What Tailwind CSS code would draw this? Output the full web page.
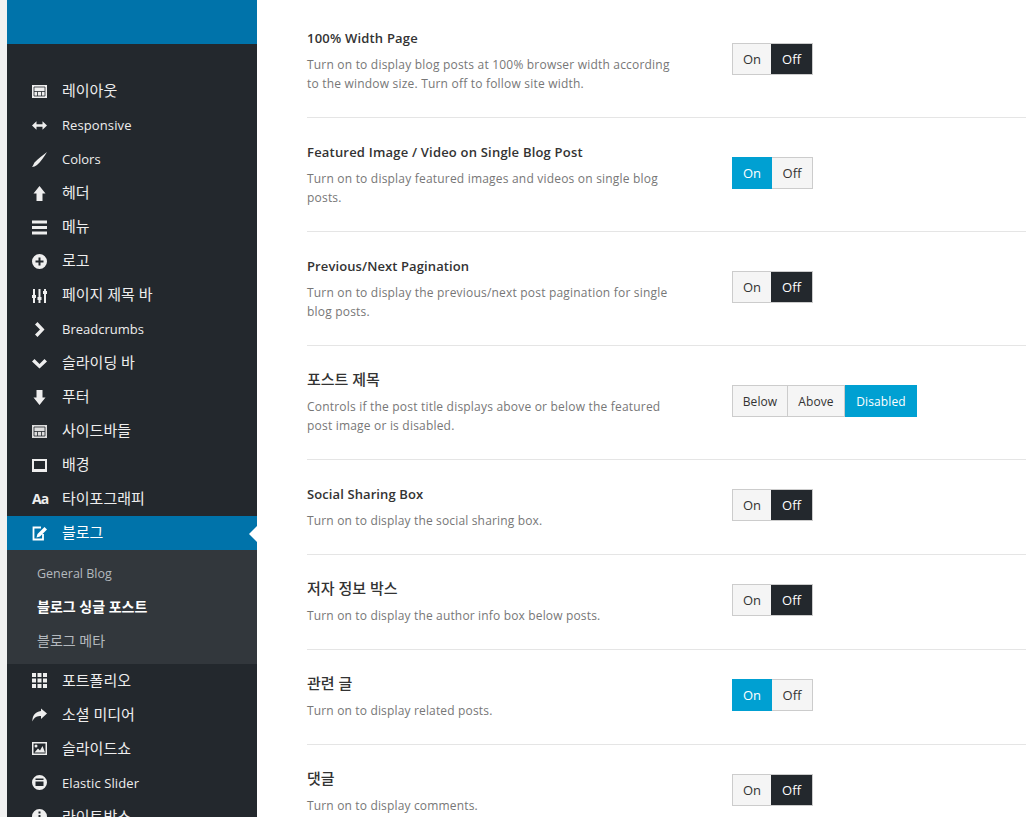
<!DOCTYPE html>
<html lang="ko">
<head>
    <meta charset="UTF-8">
    <meta name="viewport" content="width=device-width, initial-scale=1.0">
    <title>블로그 싱글 포스트</title>
    <script src="https://cdn.jsdelivr.net/npm/@tailwindcss/browser@4"></script>
</head>
<body class="bg-white overflow-hidden font-['Open_Sans','Noto_Sans_CJK_KR',sans-serif]">
<div class="flex h-[817px] w-[1026px] overflow-hidden">
    <div class="w-[7px] shrink-0 bg-[#f1f1f1]"></div>

    <!-- sidebar -->
    <aside class="w-[250px] shrink-0 bg-[#23282d] text-[13px] text-[#eee]">
        <div class="h-[44px] bg-[#0073aa]"></div>
        <ul class="pt-[30px]">
            <li class="flex h-[34px] items-center gap-[15px] pl-[25px]">
                <svg class="w-[15px] h-[15px]" viewBox="0 0 15 15"><path fill="#eee" d="M0 1h15v13H0z"/><path fill="none" stroke="#23282d" stroke-width=".8" d="M2 3h11v9H2zM2 7.500h11M5.500 7.500V12M9.500 7.500V12"/></svg>
                <span class="pb-[2px] text-[15px]">레이아웃</span>
            </li>
            <li class="flex h-[34px] items-center gap-[15px] pl-[25px]">
                <svg class="w-[15px] h-[15px]" viewBox="0 0 15 15" fill="#eee"><path d="M0 7.500 4.500 3.200v3h6v-3L15 7.500l-4.500 4.300v-3h-6v3z"/></svg>
                <span class="pt-[2px] tracking-[.1px]">Responsive</span>
            </li>
            <li class="flex h-[34px] items-center gap-[15px] pl-[25px]">
                <svg class="w-[15px] h-[15px]" viewBox="0 0 15 15" fill="#eee"><path d="M15 0C12 5 8.500 10 5 13 3.500 14.200 1.500 15 0 15 1 14 1.500 12 2.500 10.500 6 7 11 3 15 0z"/></svg>
                <span class="pt-[2px]">Colors</span>
            </li>
            <li class="flex h-[34px] items-center gap-[15px] pl-[25px]">
                <svg class="w-[15px] h-[15px]" viewBox="0 0 15 15" fill="#eee"><path d="M7.500 0 13.500 7.500H10.500v7.500h-6V7.500H1.500z"/></svg>
                <span class="pb-[2px] text-[15px]">헤더</span>
            </li>
            <li class="flex h-[34px] items-center gap-[15px] pl-[25px]">
                <svg class="w-[15px] h-[15px]" viewBox="0 0 15 15" fill="#eee"><path d="M0 .500h15v3H0zM0 6h15v3H0zM0 11.500h15v3H0z"/></svg>
                <span class="pb-[2px] text-[15px]">메뉴</span>
            </li>
            <li class="flex h-[34px] items-center gap-[15px] pl-[25px]">
                <svg class="w-[15px] h-[15px]" viewBox="0 0 15 15" fill="#eee"><path fill-rule="evenodd" d="M7.500 0a7.500 7.500 0 1 0 0 15 7.500 7.500 0 0 0 0-15zM6.500 3.500h2v3h3v2h-3v3h-2v-3h-3v-2h3z"/></svg>
                <span class="pb-[2px] text-[15px]">로고</span>
            </li>
            <li class="flex h-[34px] items-center gap-[15px] pl-[25px]">
                <svg class="w-[15px] h-[15px]" viewBox="0 0 15 15" fill="#eee"><path d="M1 1h2v14H1zM0 7h4v3H0zM6.500 1h2v14h-2zM5.500 9h4v3h-4zM12 1h2v14h-2zM11 3h4v3h-4z"/></svg>
                <span class="pb-[2px] text-[15px]">페이지 제목 바</span>
            </li>
            <li class="flex h-[34px] items-center gap-[15px] pl-[25px]">
                <svg class="w-[15px] h-[15px]" viewBox="0 0 15 15" fill="#eee"><path d="M3 2.500 5.500 0l7 7.500-7 7.500L3 12.500l5-5z"/></svg>
                <span class="pt-[2px]">Breadcrumbs</span>
            </li>
            <li class="flex h-[34px] items-center gap-[15px] pl-[25px]">
                <svg class="w-[15px] h-[15px]" viewBox="0 0 15 15" fill="#eee"><path d="M2.500 3 7.500 8l5-5L15 5.500l-7.500 7-7.500-7z"/></svg>
                <span class="pb-[2px] text-[15px]">슬라이딩 바</span>
            </li>
            <li class="flex h-[34px] items-center gap-[15px] pl-[25px]">
                <svg class="w-[15px] h-[15px]" viewBox="0 0 15 15" fill="#eee"><path d="M4.500 0h6v7.500h3L7.500 15 1.500 7.500h3z"/></svg>
                <span class="pb-[2px] text-[15px]">푸터</span>
            </li>
            <li class="flex h-[34px] items-center gap-[15px] pl-[25px]">
                <svg class="w-[15px] h-[15px]" viewBox="0 0 15 15"><path fill="#ddd" d="M0 1h15v13H0z"/><path fill="none" stroke="#23282d" stroke-width=".8" d="M2 3h11v9H2zM2 7.500h11M5.500 7.500V12M9.500 7.500V12"/></svg>
                <span class="pb-[2px] text-[15px]">사이드바들</span>
            </li>
            <li class="flex h-[34px] items-center gap-[15px] pl-[25px]">
                <svg class="w-[15px] h-[15px]" viewBox="0 0 15 15" fill="#eee"><path fill-rule="evenodd" d="M0 1h15v13H0zM2 3v8h11V3z"/></svg>
                <span class="pb-[2px] text-[15px]">배경</span>
            </li>
            <li class="flex h-[34px] items-center gap-[15px] pl-[25px]">
                <span class="w-[15px] whitespace-nowrap text-[14px] font-bold leading-none tracking-[-1px] text-[#eee]">Aa</span>
                <span class="pb-[2px] text-[15px]">타이포그래피</span>
            </li>
            <li class="relative flex h-[34px] items-center gap-[15px] pl-[25px] bg-[#0073aa] text-white">
                <svg class="w-[15px] h-[15px]" viewBox="0 0 15 15" fill="none" stroke="#fff" stroke-width="1.800"><path d="M9 1.500H1.500v12h9.500V8"/><path fill="#fff" stroke="none" d="M12.500 1 15 3.500 8 10.500l-3.500 1 1-3.500z"/></svg>
                <span class="pb-[2px] text-[15px]">블로그</span>
                <div class="absolute right-0 top-[10px] h-0 w-0 border-y-[8px] border-r-[8px] border-y-transparent border-r-white"></div>
            </li>
            <li class="bg-[#32373c] py-[7px] pl-[30px] text-[14px] text-[#b4b9be]">
                <div class="flex h-[33.33px] items-center pt-[1px] text-[12.500px]">General Blog</div>
                <div class="flex h-[33.33px] items-center font-semibold text-white">블로그 싱글 포스트</div>
                <div class="flex h-[33.33px] items-center">블로그 메타</div>
            </li>
            <li class="flex h-[34px] items-center gap-[15px] pl-[25px]">
                <svg class="w-[15px] h-[15px]" viewBox="0 0 15 15" fill="#eee"><path d="M0 0h4v4H0zM5.500 0h4v4h-4zM11 0h4v4h-4zM0 5.500h4v4H0zM5.500 5.500h4v4h-4zM11 5.500h4v4h-4zM0 11h4v4H0zM5.500 11h4v4h-4zM11 11h4v4h-4z"/></svg>
                <span class="pb-[2px] text-[15px]">포트폴리오</span>
            </li>
            <li class="flex h-[34px] items-center gap-[15px] pl-[25px]">
                <svg class="w-[15px] h-[15px]" viewBox="0 0 15 15" fill="#eee"><path d="M9 1.500 15 6.500 9 12V9C5.500 9 2 10 .500 14.500 0 9 3 5 9 4z"/></svg>
                <span class="pb-[2px] text-[15px]">소셜 미디어</span>
            </li>
            <li class="flex h-[34px] items-center gap-[15px] pl-[25px]">
                <svg class="w-[15px] h-[15px]" viewBox="0 0 15 15" fill="#eee"><path fill-rule="evenodd" d="M0 1h15v13H0zM1.500 2.500v10h12v-10zM4 3.500a1.500 1.500 0 1 1 0 3 1.500 1.500 0 0 1 0-3zM2.500 11.500 6 7.500l2 2 2.500-4.500 2.500 6.500z"/></svg>
                <span class="pb-[2px] text-[15px]">슬라이드쇼</span>
            </li>
            <li class="flex h-[34px] items-center gap-[15px] pl-[25px]">
                <svg class="w-[15px] h-[15px]" viewBox="0 0 15 15" fill="#eee"><path fill-rule="evenodd" d="M7.500 0a7.500 7.500 0 1 0 0 15 7.500 7.500 0 0 0 0-15zM3.500 3.500h8v1.500h-8zM3.500 6.500h8v4.500h-8z"/></svg>
                <span class="pt-[2px] tracking-[.1px]">Elastic Slider</span>
            </li>
            <li class="flex h-[34px] items-center gap-[15px] pl-[25px]">
                <svg class="w-[15px] h-[15px]" viewBox="0 0 15 15" fill="#eee"><path fill-rule="evenodd" d="M7.500 0a7.500 7.500 0 1 0 0 15 7.500 7.500 0 0 0 0-15zM6.500 2.500h2v2h-2zM6.500 6h2v6h-2z"/></svg>
                <span class="pb-[2px] text-[15px]">라이트박스</span>
            </li>
        </ul>
    </aside>

    <!-- options -->
    <main class="flex-1 pt-[4px] pl-[50px] overflow-hidden">
        <div class="flex h-[114px] items-center border-b border-[#e5e5e5]">
            <div class="w-[425px] shrink-0 self-start pt-[25px]">
                <h3 class="text-[13px] font-semibold leading-[19px] tracking-[.2px] text-[#333]">100% Width Page</h3>
                <p class="mt-[7px] w-[370px] text-[12px] leading-[19px] tracking-[.2px] text-[#777]">Turn on to display blog posts at 100% browser width according to the window size. Turn off to follow site width.</p>
            </div>
            <div class="flex h-[32px] mb-[3px] border border-[#ccc] text-[13px] text-[#333]">
                <span class="flex w-[38px] items-center justify-center bg-[#f5f5f5] pt-[2px]">On</span>
                <span class="flex w-[41px] items-center justify-center bg-[#23282d] pt-[2px] text-white">Off</span>
            </div>
        </div>
        <div class="flex h-[114px] items-center border-b border-[#e5e5e5]">
            <div class="w-[425px] shrink-0 self-start pt-[25px]">
                <h3 class="text-[13px] font-semibold leading-[19px] tracking-[.2px] text-[#333]">Featured Image / Video on Single Blog Post</h3>
                <p class="mt-[7px] w-[370px] text-[12px] leading-[19px] tracking-[.2px] text-[#777]">Turn on to display featured images and videos on single blog posts.</p>
            </div>
            <div class="flex h-[32px] mb-[3px] text-[13px] text-[#333]">
                <span class="flex w-[40px] items-center justify-center bg-[#00a0d2] pt-[2px] text-white">On</span>
                <span class="flex w-[41px] items-center justify-center border border-l-0 border-[#ccc] bg-[#f5f5f5] pt-[2px]">Off</span>
            </div>
        </div>
        <div class="flex h-[114px] items-center border-b border-[#e5e5e5]">
            <div class="w-[425px] shrink-0 self-start pt-[25px]">
                <h3 class="text-[13px] font-semibold leading-[19px] tracking-[.1px] text-[#333]">Previous/Next Pagination</h3>
                <p class="mt-[7px] w-[370px] text-[12px] leading-[19px] tracking-[.2px] text-[#777]">Turn on to display the previous/next post pagination for single blog posts.</p>
            </div>
            <div class="flex h-[32px] mb-[3px] border border-[#ccc] text-[13px] text-[#333]">
                <span class="flex w-[38px] items-center justify-center bg-[#f5f5f5] pt-[2px]">On</span>
                <span class="flex w-[41px] items-center justify-center bg-[#23282d] pt-[2px] text-white">Off</span>
            </div>
        </div>
        <div class="flex h-[114px] items-center border-b border-[#e5e5e5]">
            <div class="w-[425px] shrink-0 self-start pt-[24px]">
                <h3 class="text-[15px] font-medium leading-[19px] text-[#333]">포스트 제목</h3>
                <p class="mt-[8px] w-[370px] text-[12px] leading-[19px] tracking-[.2px] text-[#777]">Controls if the post title displays above or below the featured post image or is disabled.</p>
            </div>
            <div class="flex h-[32px] mb-[3px] text-[12px] tracking-[.1px] text-[#333]">
                <span class="flex w-[56px] items-center justify-center border border-[#ccc] bg-[#f5f5f5] pt-[2px]">Below</span>
                <span class="flex w-[57px] items-center justify-center border border-l-0 border-[#ccc] bg-[#f5f5f5] pt-[2px]">Above</span>
                <span class="flex w-[72px] items-center justify-center bg-[#00a0d2] pt-[2px] text-white">Disabled</span>
            </div>
        </div>
        <div class="flex h-[95px] items-center border-b border-[#e5e5e5]">
            <div class="w-[425px] shrink-0 self-start pt-[25px]">
                <h3 class="text-[13px] font-semibold leading-[19px] tracking-[.1px] text-[#333]">Social Sharing Box</h3>
                <p class="mt-[7px] w-[370px] text-[12px] leading-[19px] tracking-[.16px] text-[#777]">Turn on to display the social sharing box.</p>
            </div>
            <div class="flex h-[32px] mb-[5px] border border-[#ccc] text-[13px] text-[#333]">
                <span class="flex w-[38px] items-center justify-center bg-[#f5f5f5] pt-[2px]">On</span>
                <span class="flex w-[41px] items-center justify-center bg-[#23282d] pt-[2px] text-white">Off</span>
            </div>
        </div>
        <div class="flex h-[95px] items-center border-b border-[#e5e5e5]">
            <div class="w-[425px] shrink-0 self-start pt-[24px]">
                <h3 class="text-[15px] font-medium leading-[19px] text-[#333]">저자 정보 박스</h3>
                <p class="mt-[8px] w-[370px] text-[12px] leading-[19px] tracking-[.16px] text-[#777]">Turn on to display the author info box below posts.</p>
            </div>
            <div class="flex h-[32px] mb-[5px] border border-[#ccc] text-[13px] text-[#333]">
                <span class="flex w-[38px] items-center justify-center bg-[#f5f5f5] pt-[2px]">On</span>
                <span class="flex w-[41px] items-center justify-center bg-[#23282d] pt-[2px] text-white">Off</span>
            </div>
        </div>
        <div class="flex h-[95px] items-center border-b border-[#e5e5e5]">
            <div class="w-[425px] shrink-0 self-start pt-[24px]">
                <h3 class="text-[15px] font-medium leading-[19px] text-[#333]">관련 글</h3>
                <p class="mt-[8px] w-[370px] text-[12px] leading-[19px] tracking-[.16px] text-[#777]">Turn on to display related posts.</p>
            </div>
            <div class="flex h-[32px] mb-[5px] text-[13px] text-[#333]">
                <span class="flex w-[40px] items-center justify-center bg-[#00a0d2] pt-[2px] text-white">On</span>
                <span class="flex w-[41px] items-center justify-center border border-l-0 border-[#ccc] bg-[#f5f5f5] pt-[2px]">Off</span>
            </div>
        </div>
        <div class="flex h-[95px] items-center">
            <div class="w-[425px] shrink-0 self-start pt-[24px]">
                <h3 class="text-[15px] font-medium leading-[19px] text-[#333]">댓글</h3>
                <p class="mt-[8px] w-[370px] text-[12px] leading-[19px] tracking-[.16px] text-[#777]">Turn on to display comments.</p>
            </div>
            <div class="flex h-[32px] mb-[5px] border border-[#ccc] text-[13px] text-[#333]">
                <span class="flex w-[38px] items-center justify-center bg-[#f5f5f5] pt-[2px]">On</span>
                <span class="flex w-[41px] items-center justify-center bg-[#23282d] pt-[2px] text-white">Off</span>
            </div>
        </div>
    </main>
</div>
</body>
</html>
